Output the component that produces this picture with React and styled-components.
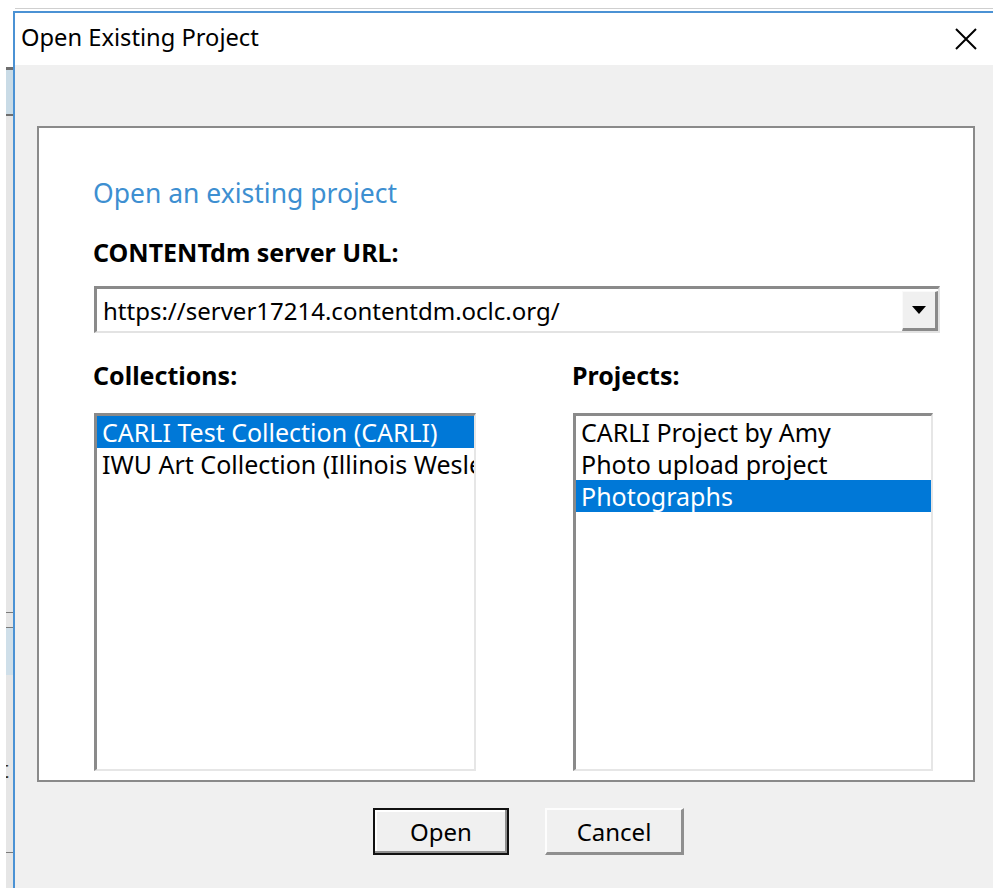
import styled, { createGlobalStyle } from 'styled-components';

const GlobalStyle = createGlobalStyle`
  html, body {
    margin: 0;
    padding: 0;
    background: #ffffff;
  }
  body {
    font-family: "Noto Sans", "DejaVu Sans", sans-serif;
    color: #000;
  }
`;

const Screen = styled.div`
  width: 993px;
  height: 888px;
  display: flex;
  flex-direction: column;
  overflow: hidden;
  background: #ffffff;
`;

const TopEdge = styled.div`
  height: 11px;
  display: flex;
  flex-direction: column;
  justify-content: flex-end;
`;

const EdgeShadow = styled.div`
  height: 1px;
  margin: 0 0 2px 15px;
  background: #cfcfcf;
`;

const Desk = styled.div`
  flex: 1;
  display: flex;
  min-height: 0;
`;

/* sliver of the window lying behind the dialog */
const Backdrop = styled.div`
  width: 7px;
  margin-left: 6px;
  display: flex;
  flex-direction: column;
  background: #e6e6e6;
  overflow: hidden;
`;

const Band = styled.div`
  height: ${(p) => p.h}px;
  flex-shrink: 0;
  background: ${(p) => p.c || '#e6e6e6'};
`;

const BandGlyph = styled.div`
  height: 18px;
  flex-shrink: 0;
  font-size: 24px;
  line-height: 18px;
  text-indent: -6px;
  color: #3a2c10;
  white-space: nowrap;
`;

const Window = styled.div`
  flex: 1;
  display: flex;
  flex-direction: column;
  border-top: 2px solid #4b92d4;
  border-left: 2px solid #4b92d4;
  background: #f0f0f0;
`;

const TitleBar = styled.div`
  height: 52px;
  box-sizing: border-box;
  padding: 0 16px 4px 6px;
  display: flex;
  align-items: center;
  justify-content: space-between;
  background: #ffffff;
`;

const Title = styled.span`
  font-size: 23.7px;
  color: #000;
`;

const CloseButton = styled.div`
  width: 22px;
  height: 22px;
  margin-top: 4px;
  display: flex;
`;

const Body = styled.div`
  flex: 1;
  padding: 61px 18px 0 22px;
  display: flex;
  flex-direction: column;
`;

const Panel = styled.div`
  border: 2px solid #8a8a8a;
  background: #ffffff;
  padding: 47px 33px 9px 54px;
  display: flex;
  flex-direction: column;
`;

const Instruction = styled.div`
  font-size: 26.5px;
  line-height: 36px;
  color: #3d8fd1;
  margin-bottom: 24px;
`;

const FieldLabel = styled.div`
  font-size: 25px;
  font-weight: 700;
  line-height: 34px;
  margin-bottom: ${(p) => p.gap}px;
`;

const Combo = styled.div`
  height: 47px;
  box-sizing: border-box;
  margin-left: 1px;
  width: 846px;
  display: flex;
  align-items: center;
  border-style: solid;
  border-width: 3px 2px 2px 3px;
  border-color: #8a8a8a #e3e3e3 #e3e3e3 #8a8a8a;
  background: #ffffff;
`;

const ComboText = styled.div`
  flex: 1;
  padding-left: 6px;
  font-size: 24px;
  white-space: nowrap;
  overflow: hidden;
`;

const DropButton = styled.div`
  width: 36px;
  height: 40px;
  box-sizing: border-box;
  margin-top: 1px;
  display: flex;
  align-items: center;
  justify-content: center;
  background: #f0f0f0;
  border-style: solid;
  border-width: 1px 3px 3px 1px;
  border-color: #fafafa #8a8a8a #8a8a8a #fafafa;
`;

const Columns = styled.div`
  margin-top: 25px;
  display: grid;
  grid-template-columns: 479px 1fr;
`;

const Column = styled.div`
  display: flex;
  flex-direction: column;
`;

const ListBox = styled.div`
  width: ${(p) => p.w}px;
  height: 358px;
  margin-left: 1px;
  box-sizing: border-box;
  border-style: solid;
  border-width: 3px 2px 2px 3px;
  border-color: #8a8a8a #e6e6e6 #e6e6e6 #8a8a8a;
  background: #ffffff;
  overflow: hidden;
`;

const ListItem = styled.div`
  height: 32px;
  line-height: 32px;
  padding-left: 5px;
  font-size: 25px;
  white-space: nowrap;
  overflow: hidden;
  background: ${(p) => (p.selected ? '#0078d7' : 'transparent')};
  color: ${(p) => (p.selected ? '#ffffff' : '#000000')};
`;

const ButtonRow = styled.div`
  padding: 26px 0 0 336px;
  display: flex;
  gap: 36px;
`;

const PushButton = styled.div`
  width: ${(p) => p.w}px;
  height: 47px;
  box-sizing: border-box;
  display: flex;
  align-items: center;
  justify-content: center;
  font-size: 24px;
  background: #f0f0f0;
  border-style: solid;
  ${(p) =>
    p.primary
      ? `
    border-width: 2px;
    border-color: #111111;
    box-shadow: inset -2px -2px 0 #8f8f8f, inset 2px 2px 0 #ffffff;
  `
      : `
    border-width: 2px 3px 3px 2px;
    border-color: #fdfdfd #8f8f8f #8f8f8f #fdfdfd;
  `}
`;

const collections = [
  { name: 'CARLI Test Collection (CARLI)', selected: true },
  { name: 'IWU Art Collection (Illinois Wesleyan University)' },
];

const projects = [
  { name: 'CARLI Project by Amy' },
  { name: 'Photo upload project' },
  { name: 'Photographs', selected: true },
];

export default function App() {
  return (
    <>
      <GlobalStyle />
      <Screen>
        <TopEdge>
          <EdgeShadow />
        </TopEdge>
        <Desk>
          <Backdrop>
            <Band h={56} c="#ffffff" />
            <Band h={3} c="#6e6e6e" />
            <Band h={44} c="#c9dbe6" />
            <Band h={2} c="#6e6e6e" />
            <Band h={496} />
            <Band h={1} c="#7a7a7a" />
            <Band h={14} />
            <Band h={1} c="#7a7a7a" />
            <Band h={47} c="#cfdfe9" />
            <Band h={85} />
            <BandGlyph>t</BandGlyph>
            <Band h={74} />
            <Band h={1} c="#7a7a7a" />
            <Band h={40} />
          </Backdrop>
          <Window>
            <TitleBar>
              <Title>Open Existing Project</Title>
              <CloseButton>
                <svg width="22" height="22" viewBox="0 0 22 22">
                  <path d="M1 1 L21 21 M21 1 L1 21" stroke="#000" strokeWidth="2" />
                </svg>
              </CloseButton>
            </TitleBar>
            <Body>
              <Panel>
                <Instruction>Open an existing project</Instruction>
                <FieldLabel gap={17}>CONTENTdm server URL:</FieldLabel>
                <Combo>
                  <ComboText>https://server17214.contentdm.oclc.org/</ComboText>
                  <DropButton>
                    <svg width="14" height="8" viewBox="0 0 14 8">
                      <path d="M0 0 H14 L7 8 Z" fill="#000" />
                    </svg>
                  </DropButton>
                </Combo>
                <Columns>
                  <Column>
                    <FieldLabel gap={21}>Collections:</FieldLabel>
                    <ListBox w={382}>
                      {collections.map((c) => (
                        <ListItem key={c.name} selected={c.selected}>
                          {c.name}
                        </ListItem>
                      ))}
                    </ListBox>
                  </Column>
                  <Column>
                    <FieldLabel gap={21}>Projects:</FieldLabel>
                    <ListBox w={360}>
                      {projects.map((p) => (
                        <ListItem key={p.name} selected={p.selected}>
                          {p.name}
                        </ListItem>
                      ))}
                    </ListBox>
                  </Column>
                </Columns>
              </Panel>
              <ButtonRow>
                <PushButton primary w={136}>Open</PushButton>
                <PushButton w={139}>Cancel</PushButton>
              </ButtonRow>
            </Body>
          </Window>
        </Desk>
      </Screen>
    </>
  );
}
